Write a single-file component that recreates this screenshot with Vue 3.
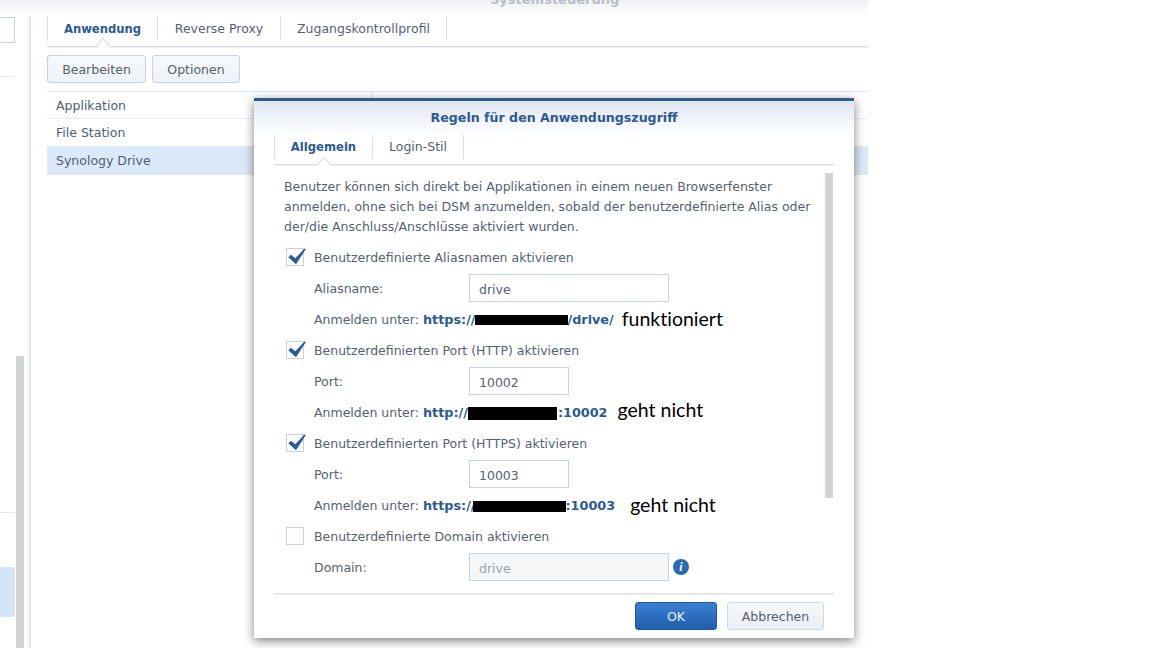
<script setup>
const tabs = ['Anwendung', 'Reverse Proxy', 'Zugangskontrollprofil']
const rows = ['Applikation', 'File Station', 'Synology Drive']
</script>

<template>
  <div class="page">
    <div class="window">
      <header class="titlebar"><span class="wintitle">Systemsteuerung</span></header>
      <div class="columns">
        <aside class="sidebar">
          <div class="sidelist">
            <div class="searchbox"></div>
            <div class="sideline first"></div>
            <div class="sideline second"></div>
            <div class="sideitem"></div>
          </div>
          <div class="sidetrack"><div class="sidethumb"></div></div>
        </aside>
        <main class="main">
          <nav class="tabs">
            <span v-for="(t, i) in tabs" :key="t" class="tab" :class="['t' + i, { active: i === 0 }]">{{ t }}</span>
          </nav>
          <div class="toolbar">
            <button class="btn edit">Bearbeiten</button>
            <button class="btn opts">Optionen</button>
          </div>
          <div class="table">
            <div v-for="(r, i) in rows" :key="r" class="row" :class="'row' + i">
              <span>{{ r }}</span>
            </div>
          </div>
        </main>
      </div>
    </div>

    <section class="modal">
      <h1 class="mtitle">Regeln für den Anwendungszugriff</h1>
      <nav class="mtabs">
        <span class="mtab m0 active">Allgemein</span>
        <span class="mtab m1">Login-Stil</span>
      </nav>
      <div class="mbody">
        <div class="content">
          <p class="intro">Benutzer können sich direkt bei Applikationen in einem neuen Browserfenster<br>anmelden, ohne sich bei DSM anzumelden, sobald der benutzerdefinierte Alias oder<br>der/die Anschluss/Anschlüsse aktiviert wurden.</p>

          <div class="option">
            <div class="check"><span class="box"><svg class="tick" viewBox="0 0 21 18"><polygon points="2.3,9.3 5,6.7 9.3,10.3 18.7,.3 19.7,1.3 10,16.3" /></svg></span>Benutzerdefinierte Aliasnamen aktivieren</div>
            <div class="field"><label>Aliasname:</label><span class="input wide">drive</span></div>
            <div class="login">Anmelden unter: <b>https://<i class="redact red1"></i>/drive/</b><span class="note n1">funktioniert</span></div>
          </div>

          <div class="option">
            <div class="check"><span class="box"><svg class="tick" viewBox="0 0 21 18"><polygon points="2.3,9.3 5,6.7 9.3,10.3 18.7,.3 19.7,1.3 10,16.3" /></svg></span>Benutzerdefinierten Port (HTTP) aktivieren</div>
            <div class="field"><label>Port:</label><span class="input">10002</span></div>
            <div class="login">Anmelden unter: <b>http://<i class="redact red2"></i>:10002</b><span class="note n2">geht nicht</span></div>
          </div>

          <div class="option">
            <div class="check"><span class="box"><svg class="tick" viewBox="0 0 21 18"><polygon points="2.3,9.3 5,6.7 9.3,10.3 18.7,.3 19.7,1.3 10,16.3" /></svg></span>Benutzerdefinierten Port (HTTPS) aktivieren</div>
            <div class="field"><label>Port:</label><span class="input">10003</span></div>
            <div class="login">Anmelden unter: <b>https://<i class="redact red3"></i>:10003</b><span class="note n3">geht nicht</span></div>
          </div>

          <div class="option">
            <div class="check"><span class="box"></span>Benutzerdefinierte Domain aktivieren</div>
            <div class="field"><label>Domain:</label><span class="input wide off">drive</span><span class="info">i</span></div>
          </div>
        </div>
        <div class="mscroll"></div>
      </div>
      <footer class="mfoot">
        <button class="mbtn ok">OK</button>
        <button class="mbtn cancel">Abbrechen</button>
      </footer>
    </section>
  </div>
</template>

<style>
html, body { margin: 0; background: #fff; overflow: hidden; }
</style>

<style scoped>
.page {
  position: relative;
  width: 1152px;
  height: 648px;
  overflow: hidden;
  background: #fff;
  font-family: "DejaVu Sans", sans-serif;
  font-size: 12.5px;
  color: #56616f;
}
.window { width: 868px; height: 648px; display: flex; flex-direction: column; }
.titlebar {
  height: 16px;
  background: linear-gradient(#eef0f3, #ffffff);
  position: relative;
  overflow: hidden;
  flex: none;
}
.wintitle {
  position: absolute;
  left: 490px;
  top: -8px;
  font-weight: bold;
  font-size: 13px;
  line-height: 16px;
  color: #b9bec5;
}
.columns { display: flex; flex: 1; min-height: 0; }
.sidebar {
  width: 28px;
  flex: none;
  display: flex;
  border-right: 2px solid #eeeff0;
  box-shadow: 1px 0 0 #dcdde0;
  margin-right: 1px;
}
.sidelist { width: 15px; flex: none; }
.searchbox {
  margin-top: 1px;
  height: 24px;
  border: 1px solid #c8d3e0;
  border-left: none;
}
.sideline { height: 1px; background: #e6ebf1; }
.sideline.first { margin-top: 33px; }
.sideline.second { margin-top: 435px; }
.sideitem {
  margin-top: 54px;
  height: 50px;
  background: #d5e5f7;
  border-radius: 0 3px 3px 0;
}
.sidetrack { width: 8px; margin-left: 1px; padding-top: 340px; }
.sidethumb { height: 292px; background: #d3d4d6; }

.main { flex: 1; min-width: 0; padding-left: 16px; }
.tabs {
  height: 30px;
  display: flex;
  border-bottom: 1px solid #d8dbde;
  box-shadow: 0 1px 0 #f0f1f2;
  position: relative;
  align-items: flex-start;
}
.tab {
  height: 24px;
  line-height: 26px;
  box-sizing: border-box;
  text-align: center;
  border-right: 1px solid #d6dfe9;
  color: #56616f;
  position: relative;
}
.tab.t0 { width: 111px; border-left: 1px solid #d6dfe9; }
.tab.t1 { width: 123px; }
.tab.t2 { width: 166px; }
.active { font-weight: bold; font-size: 11.6px; color: #2b5a94 !important; }
.tab.active::after, .mtab.active::after {
  content: "";
  position: absolute;
  left: 50%;
  bottom: -10px;
  width: 9px;
  height: 9px;
  margin-left: -5px;
  background: #fff;
  border-left: 1px solid #d8dbde;
  border-top: 1px solid #d8dbde;
  transform: rotate(45deg);
}
.toolbar { display: flex; gap: 6px; padding-top: 8px; height: 29px; }
.btn {
  height: 28px;
  box-sizing: border-box;
  border: 1px solid #c6d2df;
  border-radius: 3px;
  background: linear-gradient(#f6f9fc, #edf2f7);
  font: inherit;
  color: #56616f;
  padding: 0;
}
.btn.edit { width: 99px; }
.btn.opts { width: 88px; }
.table {
  margin-top: 7px;
  border-top: 1px solid #dbe3ec;
  background: linear-gradient(90deg, transparent 325px, #dbe3ec 325px, #dbe3ec 326px, transparent 326px) no-repeat 0 0 / 100% 7px;
}
.row {
  display: flex;
  align-items: center;
  padding-left: 9px;
  box-sizing: border-box;
  border-bottom: 1px solid #eaeef3;
  color: #4f5e70;
}
.row0 { height: 27px; padding-top: 1px; }
.row1 { height: 27px; border-bottom: none; }
.row2 { height: 29px; background: #dce9f9; border-bottom: none; }

.modal {
  position: absolute;
  left: 254px;
  top: 98px;
  width: 600px;
  height: 540px;
  box-sizing: border-box;
  border-top: 3px solid #2d5c94;
  background: linear-gradient(#dfe6f0, #ffffff 34px);
  box-shadow: 0 3px 10px rgba(0, 0, 0, .5);
  display: flex;
  flex-direction: column;
}
.mtitle {
  margin: 0;
  height: 33px;
  line-height: 34px;
  text-align: center;
  font-size: 12.6px;
  font-weight: bold;
  color: #2b5a94;
  flex: none;
}
.mtabs {
  margin: 0 20px;
  height: 29px;
  padding-top: 1px;
  display: flex;
  align-items: flex-start;
  border-bottom: 1px solid #d8dbde;
  box-shadow: 0 1px 0 #f0f1f2;
  flex: none;
}
.mtab {
  height: 24px;
  line-height: 24px;
  box-sizing: border-box;
  text-align: center;
  border-right: 1px solid #d6dfe9;
  position: relative;
}
.mtab.m0 { width: 99px; border-left: 1px solid #d6dfe9; }
.mtab.m1 { width: 91px; }
.mbody { flex: 1; min-height: 0; margin-left: 20px; display: flex; }
.content { width: 551px; flex: none; box-sizing: border-box; padding: 12px 0 0 10px; }
.intro { margin: 0 0 11px; line-height: 20px; white-space: nowrap; }
.mscroll { width: 8px; height: 325px; margin-top: 8px; background: #d3d4d6; flex: none; }
.option { height: 93px; padding-left: 2px; }
.check { height: 18px; display: flex; align-items: center; }
.box {
  width: 18px;
  height: 18px;
  box-sizing: border-box;
  border: 1px solid #c6d2df;
  background: #fff;
  margin-right: 10px;
  position: relative;
  flex: none;
}
.tick {
  position: absolute;
  left: -1px;
  top: -1px;
  width: 21px;
  height: 18px;
  overflow: visible;
}
.tick polygon { fill: #2a5c98; }
.field { display: flex; align-items: center; height: 28px; margin-top: 8px; padding-left: 28px; }
.field label { width: 155px; flex: none; }
.input {
  width: 100px;
  height: 28px;
  box-sizing: border-box;
  border: 1px solid #c6d2df;
  line-height: 28px;
  padding: 1px 0 0 9px;
  color: #56616f;
}
.input.wide { width: 200px; }
.input.off { background: #f4f6f8; color: #9aa3ad; }
.info {
  width: 16px;
  height: 16px;
  margin-left: 4px;
  border-radius: 50%;
  background: #2a69b4;
  color: #fff;
  font: italic bold 12px/16px "Liberation Serif", serif;
  text-align: center;
}
.login { height: 20px; line-height: 20px; margin-top: 8px; padding-left: 28px; white-space: nowrap; display: flex; align-items: center; }
.login b { margin-left: 4px; font-size: 12.8px; color: #2b5a94; display: inline-flex; align-items: center; }
.redact { display: inline-block; background: #000; }
.red1 { width: 93px; height: 10px; margin-left: -1px; }
.red2 { width: 89px; height: 13px; margin-right: 1px; }
.red3 { width: 93px; height: 11px; margin-left: -3px; }
.note {
  font-family: Lato, sans-serif;
  font-size: 19.5px;
  font-variant-ligatures: none;
  color: #000;
  line-height: 20px;
  padding-bottom: 3px;
}
.n1 { margin-left: 8px; }
.n2 { margin-left: 10px; padding-bottom: 7px; }
.n3 { margin-left: 15px; }
.mfoot {
  flex: none;
  margin: 0 20px;
  height: 45px;
  box-sizing: border-box;
  border-top: 1px solid #dcdfe2;
  box-shadow: inset 0 1px 0 #f0f1f2;
  padding: 8px 10px 0 0;
  display: flex;
  justify-content: flex-end;
  gap: 10px;
}
.mbtn { height: 28px; box-sizing: border-box; border-radius: 3px; font: inherit; padding: 0; }
.ok { width: 82px; border: 1px solid #1f5a9e; background: linear-gradient(#3b80d1, #1f5fae); color: #e8f0fa; }
.cancel { width: 97px; border: 1px solid #ccd8e3; background: linear-gradient(#f6f9fb, #e9eff5); color: #56616f; }
</style>
